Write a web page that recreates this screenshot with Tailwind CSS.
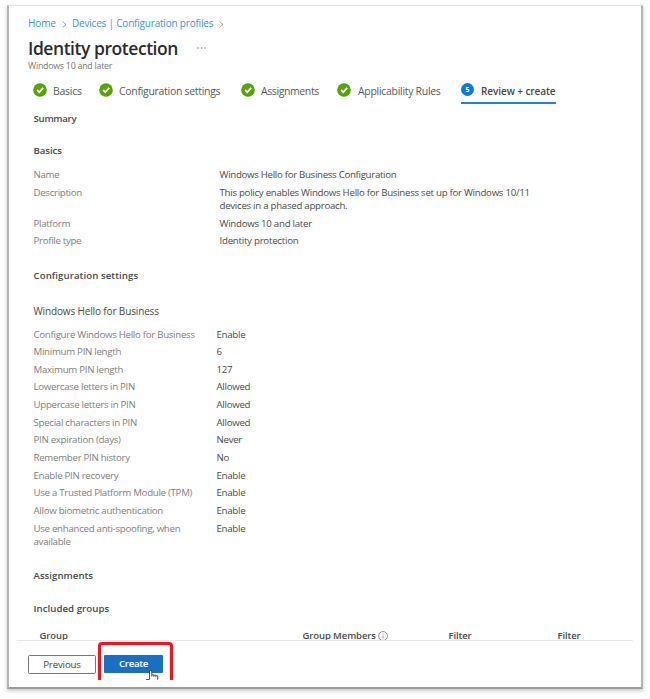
<!DOCTYPE html>
<html lang="en">
<head>
<meta charset="utf-8">
<title>Identity protection</title>
<script src="https://cdn.jsdelivr.net/npm/@tailwindcss/browser@4"></script>
</head>
<body class="h-[699px] w-[650px] overflow-hidden bg-white font-['Open_Sans','Noto_Sans',sans-serif] text-[9.7px] leading-[13.3px] text-[#4a4a4a]">
<div class="ml-[7px] mt-[5px] flex h-[684px] w-[636px] flex-col border-t border-r-2 border-b-2 border-l-2 border-t-[#e2e2e2] border-r-[#b5b5b5] border-b-[#9c9c9c] border-l-[#b5b5b5] bg-white shadow-[0_2px_4px_rgba(0,0,0,0.22)]">
  <header class="pl-[19px]">
    <nav class="mt-[11px] flex h-[14px] items-center whitespace-nowrap text-[10px] text-[#3b94e0]">
      <span class="w-[34px] tracking-[-0.1px]">Home</span>
      <svg class="mr-[5px] h-[7px] w-[5px]" viewBox="0 0 5 7" fill="none" stroke="#8a8a8a" stroke-width=".8"><path d="M.7.7 4 3.5.7 6.3"/></svg>
      <span class="w-[147px] tracking-[-0.2px]">Devices | Configuration profiles</span>
      <svg class="h-[7px] w-[5px]" viewBox="0 0 5 7" fill="none" stroke="#8a8a8a" stroke-width=".8"><path d="M.7.7 4 3.5.7 6.3"/></svg>
    </nav>
    <div class="mt-[5px] flex h-[24px] items-center">
      <h1 class="w-[169px] whitespace-nowrap text-[17.5px] font-semibold leading-[24px] tracking-[-0.45px] text-[#2b2b2b]">Identity protection</h1>
      <svg class="h-[2px] w-[9px]" viewBox="0 0 9 2" fill="#777"><circle cx="1" cy="1" r=".75"/><circle cx="4.500" cy="1" r=".75"/><circle cx="8" cy="1" r=".75"/></svg>
    </div>
    <p class="mt-px h-[10px] text-[8.8px] leading-[10px] tracking-[-0.23px] text-[#777]">Windows 10 and later</p>
  </header>

  <div class="mt-[11.5px] flex h-[23px] items-start whitespace-nowrap pl-[24px] text-[10.5px] leading-[17px] tracking-[-0.26px] text-[#5a5a5a]">
    <div class="flex w-[66px] items-start gap-[6px]"><svg class="size-[14px]" viewBox="0 0 14 14"><circle cx="7" cy="7" r="6.8" fill="#57a300"/><path d="m4 7 2.2 2.2 4-4.3" fill="none" stroke="#fff" stroke-width="1.8"/></svg><span>Basics</span></div>
    <div class="flex w-[142px] items-start gap-[6px]"><svg class="size-[14px]" viewBox="0 0 14 14"><circle cx="7" cy="7" r="6.8" fill="#57a300"/><path d="m4 7 2.2 2.2 4-4.3" fill="none" stroke="#fff" stroke-width="1.8"/></svg><span class="tracking-[-0.3px]">Configuration settings</span></div>
    <div class="flex w-[96px] items-start gap-[6px]"><svg class="size-[14px]" viewBox="0 0 14 14"><circle cx="7" cy="7" r="6.8" fill="#57a300"/><path d="m4 7 2.2 2.2 4-4.3" fill="none" stroke="#fff" stroke-width="1.8"/></svg><span class="tracking-[-0.4px]">Assignments</span></div>
    <div class="flex w-[124px] items-start gap-[7px]"><svg class="size-[14px]" viewBox="0 0 14 14"><circle cx="7" cy="7" r="6.8" fill="#57a300"/><path d="m4 7 2.2 2.2 4-4.3" fill="none" stroke="#fff" stroke-width="1.8"/></svg><span class="tracking-[-0.3px]">Applicability Rules</span></div>
    <div class="w-[95px] text-[#484848]">
      <div class="flex h-[19px] items-start gap-[7px]"><span class="flex size-[13px] shrink-0 items-center justify-center rounded-full bg-[#0f78d4] text-[7px] font-bold leading-none tracking-normal text-white">5</span><span class="text-[10px] font-semibold tracking-[-0.08px]">Review + create</span></div>
      <div class="h-[2px] bg-[#2383d8]"></div>
    </div>
  </div>

  <main class="flex h-[534.5px] flex-col overflow-hidden pl-[24.5px]">
    <h2 class="mt-[6.5px] font-semibold tracking-[-0.3px]">Summary</h2>
    <h2 class="mt-[18.5px] font-semibold tracking-[-0.1px]">Basics</h2>
    <dl class="mt-[11px] grid grid-cols-[186px_330px] gap-y-[4.4px] tracking-[-0.31px]">
      <dt class="text-[#808080]">Name</dt><dd>Windows Hello for Business Configuration</dd>
      <dt class="text-[#808080]">Description</dt><dd class="whitespace-nowrap tracking-[-0.28px]">This policy enables Windows Hello for Business set up for Windows 10/11<br>devices in a phased approach.</dd>
      <dt class="text-[#808080]">Platform</dt><dd class="tracking-[-0.27px]">Windows 10 and later</dd>
      <dt class="text-[#808080]">Profile type</dt><dd class="tracking-[-0.25px]">Identity protection</dd>
    </dl>
    <h2 class="mt-[21.2px] font-semibold tracking-[0.04px]">Configuration settings</h2>
    <h3 class="mt-[23px] text-[10px] tracking-[-0.14px]">Windows Hello for Business</h3>
    <dl class="mt-[9px] grid grid-cols-[183px_200px] gap-y-[4.35px] tracking-[-0.29px]">
      <dt class="text-[#808080]">Configure Windows Hello for Business</dt><dd>Enable</dd>
      <dt class="text-[#808080]">Minimum PIN length</dt><dd>6</dd>
      <dt class="text-[#808080]">Maximum PIN length</dt><dd class="tracking-[-0.3px]">127</dd>
      <dt class="text-[#808080]">Lowercase letters in PIN</dt><dd>Allowed</dd>
      <dt class="text-[#808080]">Uppercase letters in PIN</dt><dd>Allowed</dd>
      <dt class="text-[#808080]">Special characters in PIN</dt><dd>Allowed</dd>
      <dt class="text-[#808080]">PIN expiration (days)</dt><dd>Never</dd>
      <dt class="text-[#808080]">Remember PIN history</dt><dd>No</dd>
      <dt class="text-[#808080]">Enable PIN recovery</dt><dd>Enable</dd>
      <dt class="text-[#808080]">Use a Trusted Platform Module (TPM)</dt><dd>Enable</dd>
      <dt class="text-[#808080]">Allow biometric authentication</dt><dd>Enable</dd>
      <dt class="text-[#808080]">Use enhanced anti-spoofing, when<br>available</dt><dd>Enable</dd>
    </dl>
    <h2 class="mt-[21.2px] font-semibold">Assignments</h2>
    <h2 class="mt-[19px] font-semibold tracking-[0.03px]">Included groups</h2>
    <div class="mt-[14.5px] grid shrink-0 grid-cols-[263px_146px_109px_60px] whitespace-nowrap pl-[6px] text-[9.5px] font-semibold tracking-[-0.1px]">
      <span>Group</span>
      <span class="flex items-center gap-[2px]">Group Members <svg class="size-[10px]" viewBox="0 0 9 9" fill="none" stroke="#777" stroke-width=".7"><circle cx="4.500" cy="4.500" r="4"/><path d="M4.500 4v2.700M4.500 2.300v.9"/></svg></span>
      <span>Filter</span>
      <span>Filter</span>
    </div>
  </main>

  <footer class="mx-[8px] flex h-[41px] shrink-0 gap-[8px] border-t border-[#e8e8e8] pl-[11px] pt-[14px]">
    <button class="h-[19px] w-[68px] rounded-[1.5px] border border-[#777] bg-white text-[9.7px] leading-none tracking-[-0.15px] text-[#444]">Previous</button>
    <div class="relative">
      <button class="h-[18px] w-[59px] rounded-[1px] bg-[#1770c2] text-[9.7px] font-semibold leading-none tracking-[-0.3px] text-white">Create</button>
      <div class="absolute -left-[6px] -top-[13px] h-[38px] w-[75px] rounded-t-[4px] border-3 border-b-0 border-[#f8101c]"></div>
      <svg class="absolute left-[42px] top-[15px] h-[10px] w-[14px]" viewBox="0 0 14 10" fill="none"><path d="M4 9V1.500C4 .4 5.800.4 5.800 1.500V5l6 1v4H4z" fill="#fff"/><path d="M0 9.500h3.500V1.500C3.500.2 5.800.2 5.800 1.500v5M5.800 4.800h2v2M7.800 5.200h2v2M9.800 5.700h1.900V10" stroke="#444" stroke-width=".9"/></svg>
    </div>
  </footer>
</div>
</body>
</html>
